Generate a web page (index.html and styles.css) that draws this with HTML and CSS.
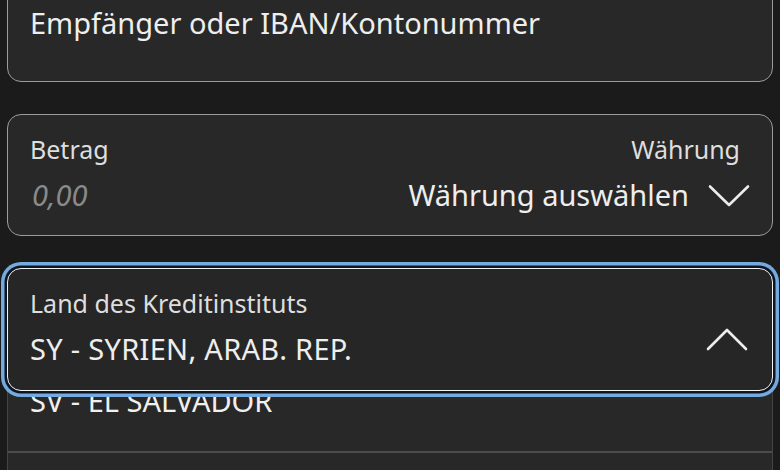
FILE: index.html
```html
<!DOCTYPE html>
<html lang="de">
<head>
<meta charset="utf-8">
<title>Überweisung</title>
<link rel="stylesheet" href="styles.css">
</head>
<body>
<main class="form">
  <div class="field field-recipient">
    <span class="value">Empfänger oder IBAN/Kontonummer</span>
  </div>

  <div class="field field-amount">
    <div class="col">
      <span class="label">Betrag</span>
      <span class="placeholder">0,00</span>
    </div>
    <div class="col col-right">
      <span class="label label-right">Währung</span>
      <div class="select">
        <span class="value">Währung auswählen</span>
        <svg class="chevron" width="42" height="23" viewBox="0 0 42 23" aria-hidden="true">
          <polyline points="2,2.5 21,21 40,2.5" />
        </svg>
      </div>
    </div>
  </div>

  <div class="combo">
    <div class="field field-focused">
      <div class="col col-grow">
        <span class="label">Land des Kreditinstituts</span>
        <span class="value value-wide">SY - SYRIEN, ARAB. REP.</span>
      </div>
      <svg class="chevron" width="42" height="23" viewBox="0 0 42 23" aria-hidden="true">
        <polyline points="2,21 21,2 40,21" />
      </svg>
    </div>
    <ul class="listbox">
      <li class="option">SV - EL SALVADOR</li>
      <li class="option"></li>
    </ul>
  </div>
</main>
</body>
</html>
```

FILE: styles.css
```css
* { box-sizing: border-box; }

html, body {
  margin: 0;
  padding: 0;
}

body {
  width: 780px;
  height: 470px;
  overflow: hidden;
  background: #1b1b1b;
  font-family: "Noto Sans", "Open Sans", sans-serif;
  color: #ededed;
}

.form {
  display: flex;
  flex-direction: column;
  gap: 32px;
  padding: 0 7px;
}

.field {
  background: #282828;
  border: 1.5px solid #9c9c9c;
  border-radius: 14px;
}

.value {
  font-size: 29px;
  line-height: 36px;
  color: #eeeeee;
  white-space: nowrap;
}

.value-wide { letter-spacing: 0.3px; }

.label {
  font-size: 25px;
  line-height: 30px;
  color: #dedede;
  white-space: nowrap;
}

.col {
  display: flex;
  flex-direction: column;
}

.field-recipient {
  margin-top: -20px;
  height: 102px;
  padding: 24px 22px 0 22px;
}

.field-amount {
  height: 122px;
  padding: 19px 22px 0 22px;
  display: flex;
  justify-content: space-between;
}

.field-amount .col { gap: 13px; }

.placeholder {
  font-size: 29px;
  line-height: 36px;
  font-style: italic;
  color: #8a8a8a;
  padding-left: 2px;
}

.col-right { align-items: flex-end; }

.label-right { padding-right: 10px; }

.select {
  display: flex;
  align-items: center;
  gap: 19px;
}

.chevron {
  display: block;
  flex: none;
}

.chevron polyline {
  fill: none;
  stroke: #ececec;
  stroke-width: 2.6;
  stroke-linecap: round;
  stroke-linejoin: round;
}

.combo {
  position: relative;
}

.field-focused {
  position: relative;
  z-index: 2;
  height: 123px;
  padding: 19px 24px 0 22px;
  display: flex;
  align-items: center;
  background: #262626;
  border-color: #f2f2f2;
  box-shadow: 0 0 0 2.5px #0b1622, 0 0 0 6px #74aade;
}

.field-focused .col-grow {
  flex: 1;
  align-self: flex-start;
  gap: 13px;
}

.listbox {
  position: absolute;
  z-index: 1;
  top: 104px;
  left: 0;
  right: 0;
  height: 180px;
  margin: 0;
  padding: 0;
  list-style: none;
  background: #282828;
  border: 1px solid #444444;
  border-radius: 0 0 14px 14px;
  overflow: hidden;
}

.option {
  height: 80px;
  padding: 10px 22px 0 22px;
  font-size: 29px;
  line-height: 36px;
  color: #f0f0f0;
  border-bottom: 2px solid #4c4c4c;
}
```
